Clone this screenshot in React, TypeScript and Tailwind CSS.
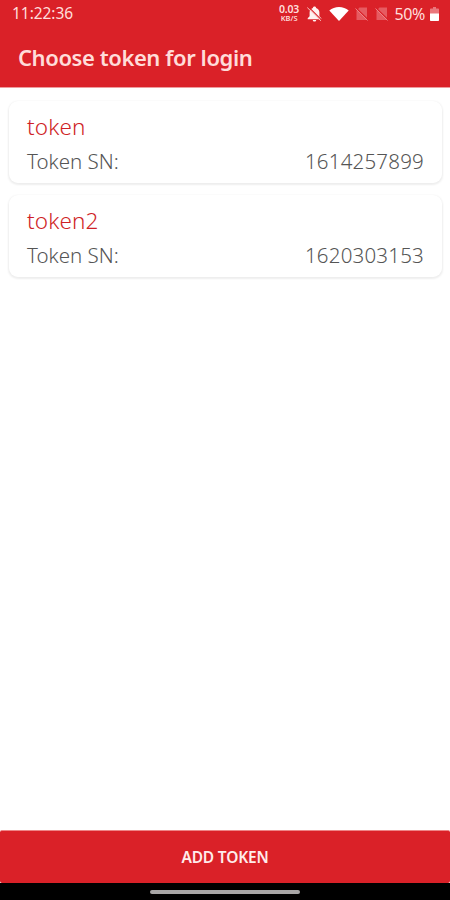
import React from 'react';

interface Token {
  name: string;
  serial: string;
}

const tokens: Token[] = [
  { name: 'token', serial: '1614257899' },
  { name: 'token2', serial: '1620303153' },
];

const BellOffIcon = () => (
  <svg className="ml-[5px] h-4 w-[17px]" viewBox="0 0 17 16" fill="none">
    <path
      d="M8.500 .5c1 0 1.500.6 1.600 1.400 2.100.6 3.300 2.300 3.300 4.500v3.800l1.900 2v1H1.700v-1l1.900-2V6.400c0-2.200 1.200-3.900 3.300-4.500C7 1.100 7.500.5 8.500.5zM6.800 14h3.400c0 .9-.8 1.600-1.700 1.600s-1.700-.7-1.700-1.600z"
      fill="#fff1f0"
    />
    <path d="M2.500 .8l13 13" stroke="#da2128" strokeWidth="1.100" />
    <path d="M1.300 1.600l13.500 13.200" stroke="#fbc9c8" strokeWidth="1" />
  </svg>
);

const WifiIcon = () => (
  <svg className="ml-[6px] h-4 w-5" viewBox="0 0 20 16">
    <path d="M.3 4.500C3 2.200 6.300 1 10 1s7 1.200 9.700 3.500L10 15z" fill="#fff" />
  </svg>
);

const NoSimIcon = ({ className }: { className: string }) => (
  <svg className={className} viewBox="0 0 13 14" fill="none">
    <path d="M4.500 .5H12v12.500H1.500V3.700z" fill="#e65b61" />
    <path d="M1 1l12 11.500" stroke="#da2128" strokeWidth="1.200" />
    <path d="M.5 1.500l12 12" stroke="#ed8287" strokeWidth="1" />
  </svg>
);

const BatteryIcon = () => (
  <svg className="ml-[5px] mt-px h-[14px] w-[9px]" viewBox="0 0 9 14">
    <path d="M3 0h3v1.500h2.200a.8.8 0 0 1 .8.8V7H0V2.300a.8.8 0 0 1 .8-.8H3z" fill="#ea777c" />
    <path d="M0 6.500h9v6.700a.8.8 0 0 1-.8.8H.8a.8.8 0 0 1-.8-.8z" fill="#fff" />
  </svg>
);

const StatusBar = () => (
  <div className="flex h-[27px] items-center justify-between pl-3 pr-[11px] text-[#ffdedb]">
    <span className="text-[15.500px] leading-none tracking-[-0.05px]">11:22:36</span>
    <div className="flex items-center">
      <div className="flex w-[23px] flex-col items-center whitespace-nowrap">
        <span className="text-[10.500px] font-semibold leading-[10px] tracking-[-0.2px]">0.03</span>
        <span className="text-[7.500px] font-semibold leading-[9px]">KB/S</span>
      </div>
      <BellOffIcon />
      <WifiIcon />
      <NoSimIcon className="ml-[6px] h-[14px] w-[13px]" />
      <NoSimIcon className="ml-[7px] h-[14px] w-[13px]" />
      <span className="ml-[7px] text-[16px] leading-none tracking-[-0.4px]">50%</span>
      <BatteryIcon />
    </div>
  </div>
);

const TokenCard = ({ token }: { token: Token }) => (
  <div className="h-[82px] rounded-[9px] bg-white px-[18px] pt-[10px] shadow-[0_1px_2px_1px_rgba(0,0,0,0.07)]">
    <h2 className="text-[22.500px] font-light leading-[32px] tracking-[0.15px] text-[#cf1f27]">{token.name}</h2>
    <div className="flex justify-between pt-px text-[20.500px] font-light leading-[34px] text-[#555]">
      <span>Token SN:</span>
      <span className="tracking-[0.2px]">{token.serial}</span>
    </div>
  </div>
);

const App: React.FC = () => {
  return (
    <div className="flex h-[900px] w-[450px] flex-col overflow-hidden bg-white font-['Noto_Sans','Open_Sans',sans-serif]">
      <header className="h-[88px] border-b border-[#ee9c9e] bg-[#da2128]">
        <StatusBar />
        <h1 className="pl-[18px] pt-[15px] text-[22px] font-semibold leading-[30px] tracking-[-0.42px] text-[#ffdcd9]">
          Choose token for login
        </h1>
      </header>

      <main className="flex flex-1 flex-col gap-3 pl-[9px] pr-2 pt-[13px]">
        {tokens.map((token) => (
          <TokenCard key={token.serial} token={token} />
        ))}
      </main>

      <button className="h-[53px] rounded-[2px] border-t border-[#ee8587] bg-[#da2128] pt-[2px] text-[15.500px] font-semibold tracking-[-0.2px] text-[#ffeceb]">
        ADD TOKEN
      </button>
      <div className="flex h-[17px] items-center justify-center bg-black">
        <div className="h-1 w-[150px] rounded-full bg-[#a8a6a6]" />
      </div>
    </div>
  );
};

export default App;
